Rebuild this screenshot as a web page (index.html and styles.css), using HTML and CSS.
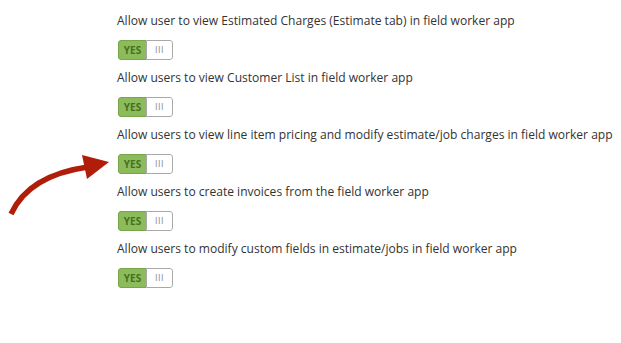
FILE: index.html
```html
<!DOCTYPE html>
<html>
<head>
<meta charset="utf-8">
<link rel="stylesheet" href="styles.css">
</head>
<body>
<div class="page">
  <svg class="arrow" width="120" height="80" viewBox="0 145 120 80">
    <path d="M11 214 C 22 190, 45 173, 88 167" fill="none" stroke="#b01e0a" stroke-width="5.5"/>
    <polygon points="82,155 109,162 87,179" fill="#b01e0a"/>
  </svg>
  <div class="list">
    <div class="item">
      <div class="label">Allow user to view Estimated Charges (Estimate tab) in field worker app</div>
      <div class="toggle"><span class="yes">YES</span><span class="no">III</span></div>
    </div>
    <div class="item">
      <div class="label">Allow users to view Customer List in field worker app</div>
      <div class="toggle"><span class="yes">YES</span><span class="no">III</span></div>
    </div>
    <div class="item">
      <div class="label">Allow users to view line item pricing and modify estimate/job charges in field worker app</div>
      <div class="toggle"><span class="yes">YES</span><span class="no">III</span></div>
    </div>
    <div class="item">
      <div class="label">Allow users to create invoices from the field worker app</div>
      <div class="toggle"><span class="yes">YES</span><span class="no">III</span></div>
    </div>
    <div class="item">
      <div class="label">Allow users to modify custom fields in estimate/jobs in field worker app</div>
      <div class="toggle"><span class="yes">YES</span><span class="no">III</span></div>
    </div>
  </div>
</div>
</body>
</html>
```
FILE: styles.css
```css
html, body {
  margin: 0;
  padding: 0;
  background: #fff;
}
.page {
  position: relative;
  width: 621px;
  height: 343px;
  font-family: "Open Sans", "Liberation Sans", sans-serif;
  color: #333;
}
.arrow {
  position: absolute;
  left: 0;
  top: 145px;
}
.list {
  padding: 10px 0 0 117px;
  display: flex;
  flex-direction: column;
}
.item {
  height: 57px;
  display: flex;
  flex-direction: column;
}
.label {
  font-size: 12.05px;
  line-height: 22px;
  height: 22px;
  white-space: nowrap;
}
.toggle {
  margin-top: 8px;
  margin-left: 1px;
  display: flex;
  width: 55px;
  height: 20px;
  box-sizing: border-box;
  border-radius: 3px;
  overflow: hidden;
  font-size: 10px;
  line-height: 18px;
}
.yes {
  width: 28px;
  box-sizing: border-box;
  background: #8cbb5c;
  border: 1px solid #77a548;
  border-right: none;
  border-radius: 3px 0 0 3px;
  color: #48701f;
  font-weight: 700;
  text-align: center;
}
.no {
  flex: 1;
  box-sizing: border-box;
  background: #fff;
  border: 1px solid #a8a8a8;
  border-radius: 0 3px 3px 0;
  color: #888;
  text-align: center;
  font-size: 9px;
  letter-spacing: 0.5px;
}
```
